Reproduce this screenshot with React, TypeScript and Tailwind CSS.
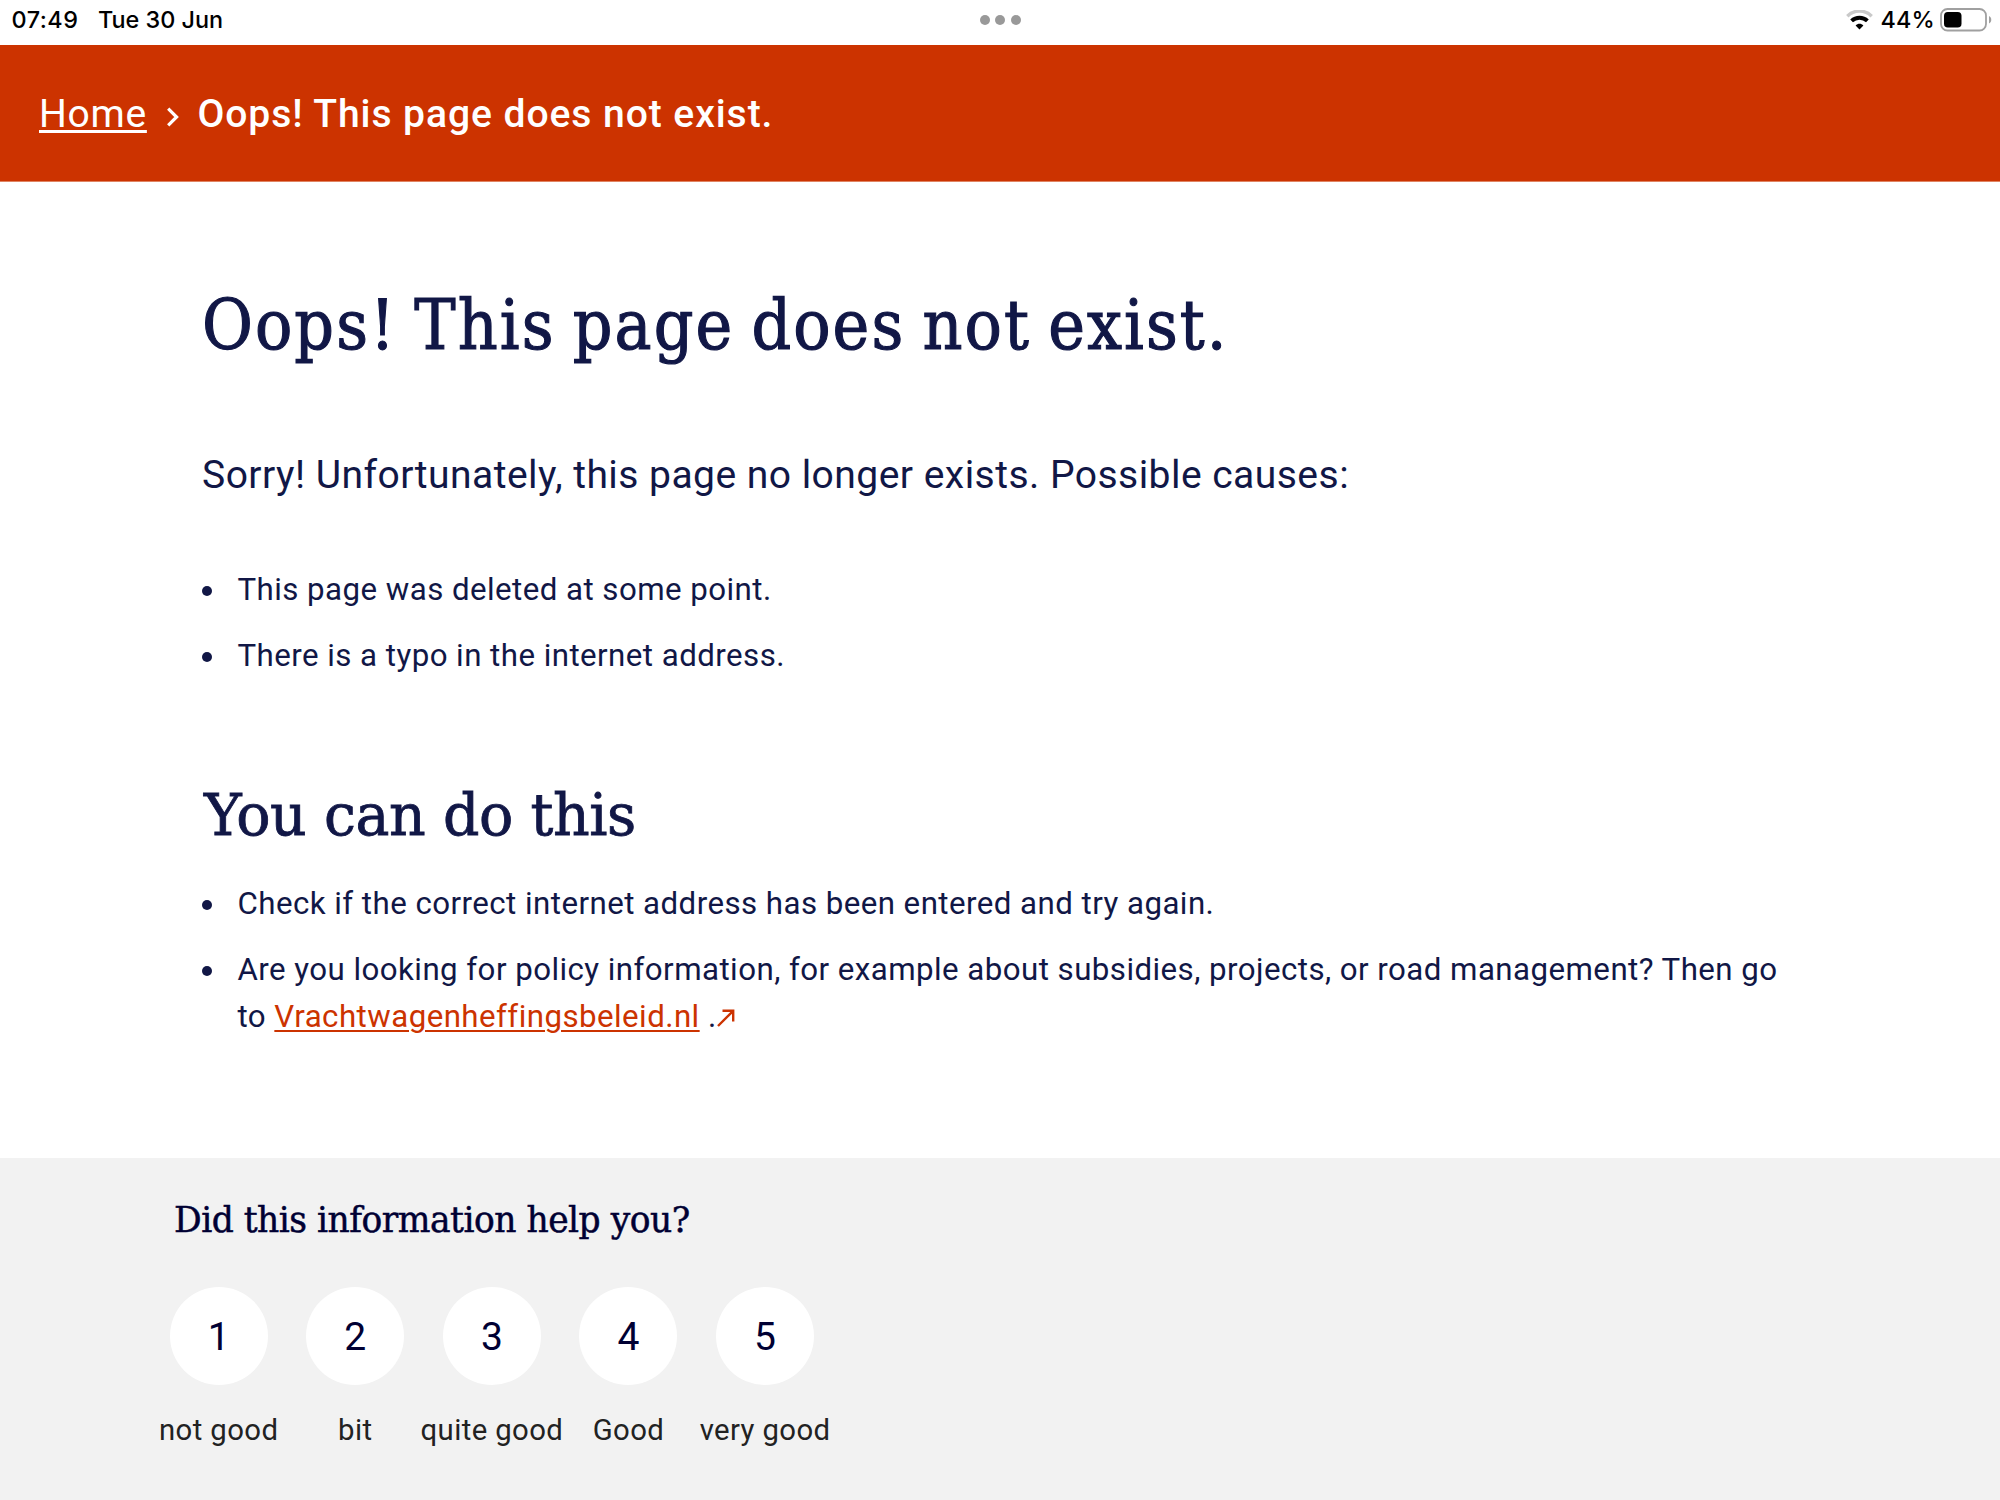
import type { ReactNode } from 'react';

const slab = "font-['DejaVu_Serif',serif]";
const slabCondensed = "font-['DejaVu_Serif_Condensed','DejaVu_Serif',serif]";

const ratings = [
  { value: 1, label: 'not good' },
  { value: 2, label: 'bit' },
  { value: 3, label: 'quite good' },
  { value: 4, label: 'Good' },
  { value: 5, label: 'very good' },
];

function Bullet({ children }: { children: ReactNode }) {
  return (
    <li className="flex">
      <span className="mt-[19.5px] mr-[25.5px] size-[10px] shrink-0 rounded-full bg-[#111746]" />
      <span>{children}</span>
    </li>
  );
}

function WifiIcon() {
  return (
    <svg className="ml-auto h-[20px] w-[27px]" viewBox="0 0 27 20" fill="none">
      <path d="M1.3 6.2C8 -0.6 19 -0.6 25.7 6.2" stroke="#c9c9c9" strokeWidth="3.4" />
      <path d="M5.6 10.9C10 6.7 17 6.7 21.4 10.9" stroke="#000" strokeWidth="4" />
      <path d="M13.5 19.4 9.6 15.5C11.8 13.2 15.2 13.2 17.4 15.5Z" fill="#000" />
    </svg>
  );
}

function BatteryIcon() {
  return (
    <svg className="ml-[5px] h-[24px] w-[53px]" viewBox="0 0 53 24" fill="none">
      <rect x="1" y="1" width="45" height="21.5" rx="6.5" stroke="#a0a0a0" strokeWidth="1.8" />
      <rect x="4" y="4" width="17.5" height="15.5" rx="3.8" fill="#000" />
      <path d="M49 8C52 9.3 52 14.2 49 15.5Z" fill="#a0a0a0" />
    </svg>
  );
}

function StatusBar() {
  return (
    <div className="grid h-[45px] grid-cols-[1fr_auto_1fr] items-center bg-white pr-[7px] pl-[11.5px] font-[Inter,sans-serif] text-[23.4px] leading-[38px] font-medium text-black">
      <div className="flex gap-[19.5px] pb-[6px]">
        <span className="tracking-[0.5px]">07:49</span>
        <span className="tracking-[0px]">Tue 30 Jun</span>
      </div>
      <div className="-ml-[4px] flex gap-[5.5px] pb-[6px]">
        <span className="size-[10px] rounded-full bg-[#999]" />
        <span className="size-[10px] rounded-full bg-[#999]" />
        <span className="size-[10px] rounded-full bg-[#999]" />
      </div>
      <div className="flex items-center pb-[6px]">
        <WifiIcon />
        <span className="ml-[8px] tracking-[0.15px]">44%</span>
        <BatteryIcon />
      </div>
    </div>
  );
}

function Breadcrumb() {
  return (
    <nav className="flex h-[137px] items-center border-b border-[#e08462] bg-[#cc3300] pl-[39px] text-[39.06px] leading-[48px] text-white">
      <a className="mt-px tracking-[0.7px] underline decoration-[3px] underline-offset-[3px]">Home</a>
      <svg className="mt-[7px] mr-[17.5px] ml-[19px] h-[20px] w-[14px]" viewBox="0 0 14 20" fill="none">
        <path d="M2.2 1.6 10.6 10 2.2 18.4" stroke="#fff" strokeWidth="3.2" />
      </svg>
      <span className="mt-px font-medium tracking-[0.93px]">Oops! This page does not exist.</span>
    </nav>
  );
}

export default function App() {
  return (
    <div className="flex h-[1500px] w-[2000px] flex-col overflow-hidden bg-white font-[Roboto,sans-serif] text-[#111746]">
      <StatusBar />
      <Breadcrumb />
      <main className="h-[976px] pt-[99px] pl-[202px] text-[31.25px] leading-[47px] tracking-[0.45px]">
        <h1
          className={`${slabCondensed} text-[69px] leading-[88px] tracking-[2.05px] [word-spacing:-4.5px] [-webkit-text-stroke:1.1px_#111746]`}
        >
          Oops! This page does not exist.
        </h1>
        <p className="mt-[77px] text-[39.06px] leading-[58px] tracking-[0.45px]">
          Sorry! Unfortunately, this page no longer exists. Possible causes:
        </p>
        <ul className="mt-[62px] flex flex-col gap-[19px]">
          <Bullet>This page was deleted at some point.</Bullet>
          <Bullet>There is a typo in the internet address.</Bullet>
        </ul>
        <h2
          className={`${slab} mt-[99px] ml-[2px] text-[57px] leading-[74px] tracking-[-0.45px] [-webkit-text-stroke:0.8px_#111746]`}
        >
          You can do this
        </h2>
        <ul className="mt-[28px] flex flex-col gap-[19px]">
          <Bullet>Check if the correct internet address has been entered and try again.</Bullet>
          <Bullet>
            Are you looking for policy information, for example about subsidies, projects, or road management? Then go
            <br />
            to{' '}
            <a className="text-[#cc3300] underline decoration-[2px] underline-offset-[3px]">Vrachtwagenheffingsbeleid.nl</a>{' '}
            .
            <svg className="inline h-[18px] w-[18px] align-baseline" viewBox="0 0 18 18" fill="none">
              <path d="M1 17 16.2 1.8M5.5 1.8H16.2V12.5" stroke="#cc3300" strokeWidth="2.4" />
            </svg>
          </Bullet>
        </ul>
      </main>
      <section className="flex-1 bg-[#f2f2f2] pt-[40px] pl-[150.4px] text-[#000033]">
        <h3
          className={`${slab} ml-[23.6px] text-[34.5px] leading-[44px] tracking-[-0.5px] [-webkit-text-stroke:0.5px_#000033]`}
        >
          Did this information help you?
        </h3>
        <div className="mt-[45px] grid w-[683px] grid-cols-5">
          {ratings.map((r) => (
            <div key={r.value} className="flex flex-col items-center">
              <button className="size-[98px] rounded-full bg-white pt-[2px] text-[39.06px]">{r.value}</button>
              <span className="mt-[25px] text-[29.3px] leading-[40px] tracking-[0.4px] whitespace-nowrap text-[#222]">
                {r.label}
              </span>
            </div>
          ))}
        </div>
      </section>
    </div>
  );
}
